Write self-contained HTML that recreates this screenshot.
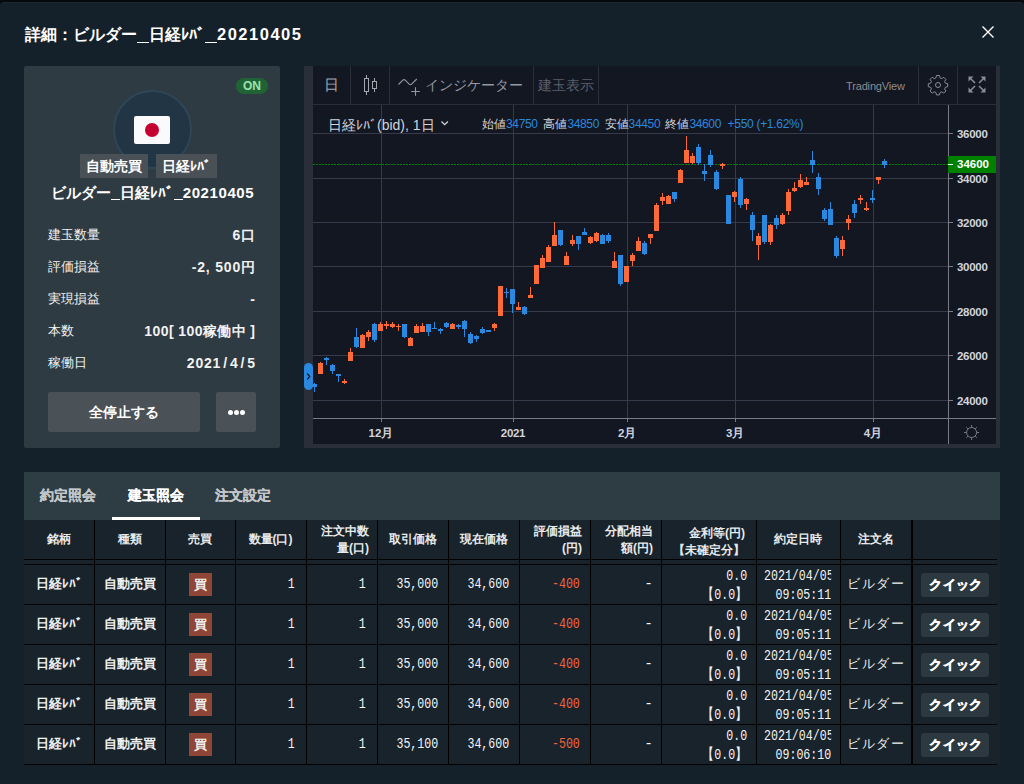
<!DOCTYPE html>
<html><head><meta charset="utf-8">
<style>
*{box-sizing:border-box;margin:0;padding:0}
html,body{width:1024px;height:784px;overflow:hidden;background:#05090c}
body{font-family:"Liberation Sans",sans-serif;color:#fff;position:relative}
.abs{position:absolute}
.modal{left:0;top:2px;width:1024px;height:782px;background:#15212a;border-radius:4px 4px 0 0;border-top:1px solid #1c272f}
.title{left:25px;top:23px;font-size:16px;font-weight:bold;color:#fff;white-space:nowrap;line-height:22px}
.close{left:981px;top:25px;width:14px;height:14px}
.card{left:24px;top:66px;width:256px;height:382px;background:#2e3b42;border-radius:2px}
.on{left:236px;top:78px;width:32px;height:16px;border-radius:8px;background:#206436;color:#9ee2aa;font-size:12px;font-weight:bold;text-align:center;line-height:16px}
.circle{left:112.5px;top:90px;width:79px;height:79px;border-radius:50%;background:#213545;border:2px solid #2e4655}
.flag{left:134px;top:116px;width:36px;height:28px;background:#fafafa;border-radius:2px}
.flag i{position:absolute;left:11px;top:7px;width:14px;height:14px;border-radius:50%;background:#c4002f}
.tag{top:154px;height:24px;background:#4a5156;font-size:14px;font-weight:bold;line-height:24px;text-align:center;color:#fff}
.name{left:24px;top:183px;width:256px;text-align:center;font-size:15px;font-weight:bold;line-height:20px;white-space:nowrap}
.row{left:48px;width:207px;height:20px;font-size:13px;line-height:20px;color:#f2f2f2}
.row span{position:absolute;right:0;top:0;font-weight:bold;white-space:nowrap;font-size:14px;letter-spacing:0.8px;margin-right:-0.8px}
.btn{top:392px;height:40px;background:#4b5257;border-radius:2px;text-align:center;line-height:40px;font-size:14px;font-weight:bold}
.dot{position:absolute;width:5px;height:5px;border-radius:50%;background:#fff}
.ct{position:absolute;white-space:nowrap;line-height:16px}
.tabs{left:24px;top:472px;width:976px;height:48px;background:#2e3c43}
.tab{top:481px;font-size:14px;font-weight:bold;line-height:28px;color:#c3c7cb;white-space:nowrap;-webkit-text-stroke:0.15px currentColor}
.tbl{left:24px;top:520px;width:976px;height:245px;background:#18232b}
.vl{position:absolute;top:520px;width:1px;height:244px;background:#000}
.hl{position:absolute;left:24px;width:973px;height:1px;background:#000}
.th{position:absolute;top:520px;height:39px;font-size:12px;font-weight:bold;color:#e8eaec;line-height:17px;display:flex;align-items:center;justify-content:center;text-align:center}
.th.r{justify-content:flex-end;text-align:right;padding-right:8px}
.td{position:absolute;height:40px;display:flex;align-items:center;white-space:nowrap;font-size:13px;font-weight:bold;color:#f0f0f0;overflow:hidden}
.c{justify-content:center}
.rt{justify-content:flex-end;padding-right:10px}
.mono{font-family:"Liberation Mono",monospace;font-weight:normal;font-size:14.5px;color:#f4f4f4}
.sx{display:inline-block;transform:scaleX(0.8)}
.buy{width:23px;height:23px;background:#8f4636;font-size:13px;line-height:23px;text-align:center;font-weight:bold}
.q{width:68px;height:24px;margin-top:2px;background:#2c3940;border-radius:3px;font-size:13px;font-weight:bold;line-height:24px;text-align:center;-webkit-text-stroke:0.5px #fff;letter-spacing:0.3px;padding-left:2px}
</style></head><body>
<div class="abs modal"></div>
<div class="abs title">詳細：ビルダー<span style="display:inline-block;width:12px;height:1.5px;background:#fff;vertical-align:-3px"></span>日経ﾚﾊﾞ<span style="display:inline-block;width:12px;height:1.5px;background:#fff;vertical-align:-3px"></span><span style="letter-spacing:1.5px;font-size:16.5px">20210405</span></div>
<svg class="abs close" viewBox="0 0 14 14"><path d="M1.5 1.5L12.5 12.5M12.5 1.5L1.5 12.5" stroke="#fff" stroke-width="1.35"/></svg>

<div class="abs card"></div>
<div class="abs on">ON</div>
<div class="abs circle"></div>
<div class="abs flag"><i></i></div>
<div class="abs tag" style="left:80px;width:68px">自動売買</div>
<div class="abs tag" style="left:156px;width:61px">日経ﾚﾊﾞ</div>
<div class="abs name" style="padding-left:1px">ビルダー<span style="display:inline-block;width:9px;height:1.5px;background:#fff;vertical-align:-2px"></span>日経ﾚﾊﾞ<span style="display:inline-block;width:9px;height:1.5px;background:#fff;vertical-align:-2px"></span><span style="letter-spacing:0.6px">20210405</span></div>
<div class="abs row" style="top:225px">建玉数量<span>6口</span></div>
<div class="abs row" style="top:257px">評価損益<span>-2, 500円</span></div>
<div class="abs row" style="top:289px">実現損益<span>-</span></div>
<div class="abs row" style="top:321px">本数<span style="letter-spacing:0.4px;margin-right:-0.4px">100[ 100稼働中 ]</span></div>
<div class="abs row" style="top:353px">稼働日<span>2021<b style="margin:0 2px">/</b>4<b style="margin:0 2px">/</b>5</span></div>
<div class="abs btn" style="left:48px;width:152px">全停止する</div>
<div class="abs btn" style="left:216px;width:40px"><i class="dot" style="left:11.5px;top:17.5px"></i><i class="dot" style="left:17.5px;top:17.5px"></i><i class="dot" style="left:23.5px;top:17.5px"></i></div>

<svg class="abs" style="left:304px;top:66px" width="696" height="382" viewBox="304 66 696 382" shape-rendering="crispEdges">
<rect x="304" y="66" width="696" height="382" fill="#2a2e39"/>
<rect x="313" y="66" width="683" height="378" fill="#131722"/>
<rect x="313" y="104" width="683" height="1" fill="#2a2e39"/>
<rect x="350" y="66" width="1" height="38" fill="#2a2e39"/>
<rect x="389" y="66" width="1" height="38" fill="#2a2e39"/>
<rect x="533" y="66" width="1" height="38" fill="#2a2e39"/>
<rect x="598" y="66" width="1" height="38" fill="#2a2e39"/>
<rect x="918" y="66" width="1" height="38" fill="#2a2e39"/>
<rect x="957" y="66" width="1" height="38" fill="#2a2e39"/>
<rect x="313" y="133" width="635" height="1" fill="#363a4a"/>
<rect x="948" y="133" width="5" height="1" fill="#787b86"/>
<rect x="313" y="178" width="635" height="1" fill="#363a4a"/>
<rect x="948" y="178" width="5" height="1" fill="#787b86"/>
<rect x="313" y="222" width="635" height="1" fill="#363a4a"/>
<rect x="948" y="222" width="5" height="1" fill="#787b86"/>
<rect x="313" y="266" width="635" height="1" fill="#363a4a"/>
<rect x="948" y="266" width="5" height="1" fill="#787b86"/>
<rect x="313" y="311" width="635" height="1" fill="#363a4a"/>
<rect x="948" y="311" width="5" height="1" fill="#787b86"/>
<rect x="313" y="355" width="635" height="1" fill="#363a4a"/>
<rect x="948" y="355" width="5" height="1" fill="#787b86"/>
<rect x="313" y="400" width="635" height="1" fill="#363a4a"/>
<rect x="948" y="400" width="5" height="1" fill="#787b86"/>
<rect x="381" y="105" width="1" height="313" fill="#363a4a"/>
<rect x="381" y="418" width="1" height="4" fill="#787b86"/>
<rect x="513" y="105" width="1" height="313" fill="#363a4a"/>
<rect x="513" y="418" width="1" height="4" fill="#787b86"/>
<rect x="627" y="105" width="1" height="313" fill="#363a4a"/>
<rect x="627" y="418" width="1" height="4" fill="#787b86"/>
<rect x="735" y="105" width="1" height="313" fill="#363a4a"/>
<rect x="735" y="418" width="1" height="4" fill="#787b86"/>
<rect x="873" y="105" width="1" height="313" fill="#363a4a"/>
<rect x="873" y="418" width="1" height="4" fill="#787b86"/>
<rect x="948" y="105" width="1" height="339" fill="#787b86"/>
<rect x="313" y="418" width="683" height="1" fill="#787b86"/>
<line x1="313" y1="164.5" x2="948" y2="164.5" stroke="#008000" stroke-width="1" stroke-dasharray="2 1"/>
<rect x="314" y="383" width="1" height="9" fill="#2b88df"/>
<rect x="312" y="384" width="5" height="3" fill="#2b88df"/>
<rect x="320" y="362" width="1" height="12" fill="#fb6a37"/>
<rect x="318" y="363" width="5" height="11" fill="#fb6a37"/>
<rect x="326" y="357" width="1" height="8" fill="#2b88df"/>
<rect x="324" y="358" width="5" height="2" fill="#2b88df"/>
<rect x="332" y="364" width="1" height="10" fill="#2b88df"/>
<rect x="330" y="365" width="5" height="6" fill="#2b88df"/>
<rect x="338" y="374" width="1" height="8" fill="#2b88df"/>
<rect x="336" y="374" width="5" height="2" fill="#2b88df"/>
<rect x="344" y="379" width="1" height="5" fill="#fb6a37"/>
<rect x="342" y="381" width="5" height="2" fill="#fb6a37"/>
<rect x="350" y="348" width="1" height="13" fill="#fb6a37"/>
<rect x="348" y="352" width="5" height="9" fill="#fb6a37"/>
<rect x="356" y="328" width="1" height="20" fill="#2b88df"/>
<rect x="354" y="337" width="5" height="10" fill="#2b88df"/>
<rect x="362" y="334" width="1" height="14" fill="#fb6a37"/>
<rect x="360" y="335" width="5" height="13" fill="#fb6a37"/>
<rect x="368" y="330" width="1" height="11" fill="#fb6a37"/>
<rect x="366" y="332" width="5" height="5" fill="#fb6a37"/>
<rect x="374" y="323" width="1" height="19" fill="#2b88df"/>
<rect x="372" y="324" width="5" height="16" fill="#2b88df"/>
<rect x="380" y="322" width="1" height="9" fill="#fb6a37"/>
<rect x="378" y="324" width="5" height="7" fill="#fb6a37"/>
<rect x="386" y="321" width="1" height="8" fill="#fb6a37"/>
<rect x="384" y="324" width="5" height="2" fill="#fb6a37"/>
<rect x="392" y="322" width="1" height="6" fill="#fb6a37"/>
<rect x="390" y="324" width="5" height="3" fill="#fb6a37"/>
<rect x="398" y="324" width="1" height="7" fill="#fb6a37"/>
<rect x="396" y="326" width="5" height="1" fill="#fb6a37"/>
<rect x="404" y="324" width="1" height="14" fill="#2b88df"/>
<rect x="402" y="324" width="5" height="13" fill="#2b88df"/>
<rect x="410" y="337" width="1" height="9" fill="#fb6a37"/>
<rect x="408" y="338" width="5" height="8" fill="#fb6a37"/>
<rect x="416" y="324" width="1" height="9" fill="#fb6a37"/>
<rect x="414" y="326" width="5" height="7" fill="#fb6a37"/>
<rect x="422" y="323" width="1" height="9" fill="#fb6a37"/>
<rect x="420" y="326" width="5" height="6" fill="#fb6a37"/>
<rect x="428" y="324" width="1" height="12" fill="#2b88df"/>
<rect x="426" y="324" width="5" height="8" fill="#2b88df"/>
<rect x="434" y="322" width="1" height="7" fill="#2b88df"/>
<rect x="432" y="328" width="5" height="1" fill="#2b88df"/>
<rect x="440" y="328" width="1" height="6" fill="#2b88df"/>
<rect x="438" y="329" width="5" height="2" fill="#2b88df"/>
<rect x="446" y="322" width="1" height="6" fill="#2b88df"/>
<rect x="444" y="323" width="5" height="4" fill="#2b88df"/>
<rect x="452" y="323" width="1" height="6" fill="#fb6a37"/>
<rect x="450" y="324" width="5" height="5" fill="#fb6a37"/>
<rect x="458" y="324" width="1" height="5" fill="#2b88df"/>
<rect x="456" y="325" width="5" height="2" fill="#2b88df"/>
<rect x="464" y="320" width="1" height="17" fill="#2b88df"/>
<rect x="462" y="321" width="5" height="8" fill="#2b88df"/>
<rect x="470" y="332" width="1" height="12" fill="#2b88df"/>
<rect x="468" y="334" width="5" height="9" fill="#2b88df"/>
<rect x="476" y="335" width="1" height="7" fill="#2b88df"/>
<rect x="474" y="336" width="5" height="3" fill="#2b88df"/>
<rect x="482" y="327" width="1" height="7" fill="#2b88df"/>
<rect x="480" y="329" width="5" height="4" fill="#2b88df"/>
<rect x="488" y="330" width="1" height="2" fill="#2b88df"/>
<rect x="486" y="330" width="5" height="2" fill="#2b88df"/>
<rect x="494" y="323" width="1" height="8" fill="#fb6a37"/>
<rect x="492" y="324" width="5" height="4" fill="#fb6a37"/>
<rect x="500" y="286" width="1" height="30" fill="#fb6a37"/>
<rect x="498" y="286" width="5" height="30" fill="#fb6a37"/>
<rect x="506" y="288" width="1" height="10" fill="#2b88df"/>
<rect x="504" y="292" width="5" height="1" fill="#2b88df"/>
<rect x="512" y="289" width="1" height="24" fill="#2b88df"/>
<rect x="510" y="289" width="5" height="15" fill="#2b88df"/>
<rect x="518" y="302" width="1" height="8" fill="#fb6a37"/>
<rect x="516" y="307" width="5" height="3" fill="#fb6a37"/>
<rect x="524" y="306" width="1" height="9" fill="#2b88df"/>
<rect x="522" y="307" width="5" height="7" fill="#2b88df"/>
<rect x="530" y="287" width="1" height="11" fill="#fb6a37"/>
<rect x="528" y="295" width="5" height="3" fill="#fb6a37"/>
<rect x="536" y="265" width="1" height="19" fill="#fb6a37"/>
<rect x="534" y="265" width="5" height="19" fill="#fb6a37"/>
<rect x="542" y="255" width="1" height="13" fill="#fb6a37"/>
<rect x="540" y="258" width="5" height="10" fill="#fb6a37"/>
<rect x="548" y="245" width="1" height="17" fill="#fb6a37"/>
<rect x="546" y="247" width="5" height="15" fill="#fb6a37"/>
<rect x="554" y="222" width="1" height="24" fill="#fb6a37"/>
<rect x="552" y="235" width="5" height="11" fill="#fb6a37"/>
<rect x="560" y="230" width="1" height="16" fill="#2b88df"/>
<rect x="558" y="230" width="5" height="15" fill="#2b88df"/>
<rect x="566" y="252" width="1" height="13" fill="#fb6a37"/>
<rect x="564" y="256" width="5" height="9" fill="#fb6a37"/>
<rect x="572" y="235" width="1" height="11" fill="#fb6a37"/>
<rect x="570" y="240" width="5" height="4" fill="#fb6a37"/>
<rect x="578" y="236" width="1" height="14" fill="#2b88df"/>
<rect x="576" y="236" width="5" height="8" fill="#2b88df"/>
<rect x="584" y="228" width="1" height="7" fill="#2b88df"/>
<rect x="582" y="232" width="5" height="3" fill="#2b88df"/>
<rect x="590" y="236" width="1" height="8" fill="#fb6a37"/>
<rect x="588" y="237" width="5" height="6" fill="#fb6a37"/>
<rect x="596" y="232" width="1" height="10" fill="#fb6a37"/>
<rect x="594" y="233" width="5" height="8" fill="#fb6a37"/>
<rect x="602" y="234" width="1" height="10" fill="#2b88df"/>
<rect x="600" y="235" width="5" height="9" fill="#2b88df"/>
<rect x="608" y="233" width="1" height="10" fill="#2b88df"/>
<rect x="606" y="235" width="5" height="6" fill="#2b88df"/>
<rect x="614" y="252" width="1" height="16" fill="#fb6a37"/>
<rect x="612" y="261" width="5" height="7" fill="#fb6a37"/>
<rect x="620" y="255" width="1" height="31" fill="#2b88df"/>
<rect x="618" y="255" width="5" height="29" fill="#2b88df"/>
<rect x="626" y="266" width="1" height="16" fill="#fb6a37"/>
<rect x="624" y="266" width="5" height="16" fill="#fb6a37"/>
<rect x="632" y="253" width="1" height="13" fill="#fb6a37"/>
<rect x="630" y="255" width="5" height="6" fill="#fb6a37"/>
<rect x="638" y="237" width="1" height="14" fill="#fb6a37"/>
<rect x="636" y="241" width="5" height="10" fill="#fb6a37"/>
<rect x="644" y="241" width="1" height="14" fill="#2b88df"/>
<rect x="642" y="243" width="5" height="11" fill="#2b88df"/>
<rect x="650" y="234" width="1" height="10" fill="#fb6a37"/>
<rect x="648" y="234" width="5" height="4" fill="#fb6a37"/>
<rect x="656" y="203" width="1" height="28" fill="#fb6a37"/>
<rect x="654" y="205" width="5" height="26" fill="#fb6a37"/>
<rect x="662" y="193" width="1" height="12" fill="#fb6a37"/>
<rect x="660" y="197" width="5" height="4" fill="#fb6a37"/>
<rect x="668" y="195" width="1" height="9" fill="#fb6a37"/>
<rect x="666" y="196" width="5" height="8" fill="#fb6a37"/>
<rect x="674" y="192" width="1" height="10" fill="#2b88df"/>
<rect x="672" y="192" width="5" height="7" fill="#2b88df"/>
<rect x="680" y="169" width="1" height="14" fill="#fb6a37"/>
<rect x="678" y="170" width="5" height="13" fill="#fb6a37"/>
<rect x="686" y="136" width="1" height="27" fill="#fb6a37"/>
<rect x="684" y="150" width="5" height="13" fill="#fb6a37"/>
<rect x="692" y="153" width="1" height="11" fill="#fb6a37"/>
<rect x="690" y="156" width="5" height="7" fill="#fb6a37"/>
<rect x="698" y="144" width="1" height="21" fill="#2b88df"/>
<rect x="696" y="147" width="5" height="16" fill="#2b88df"/>
<rect x="704" y="164" width="1" height="17" fill="#2b88df"/>
<rect x="702" y="171" width="5" height="3" fill="#2b88df"/>
<rect x="710" y="150" width="1" height="17" fill="#2b88df"/>
<rect x="708" y="155" width="5" height="10" fill="#2b88df"/>
<rect x="716" y="170" width="1" height="20" fill="#2b88df"/>
<rect x="714" y="172" width="5" height="17" fill="#2b88df"/>
<rect x="722" y="163" width="1" height="6" fill="#fb6a37"/>
<rect x="720" y="164" width="5" height="2" fill="#fb6a37"/>
<rect x="728" y="195" width="1" height="29" fill="#2b88df"/>
<rect x="726" y="195" width="5" height="29" fill="#2b88df"/>
<rect x="734" y="191" width="1" height="11" fill="#fb6a37"/>
<rect x="732" y="192" width="5" height="5" fill="#fb6a37"/>
<rect x="740" y="177" width="1" height="31" fill="#2b88df"/>
<rect x="738" y="179" width="5" height="26" fill="#2b88df"/>
<rect x="746" y="198" width="1" height="12" fill="#fb6a37"/>
<rect x="744" y="199" width="5" height="5" fill="#fb6a37"/>
<rect x="752" y="212" width="1" height="29" fill="#2b88df"/>
<rect x="750" y="215" width="5" height="15" fill="#2b88df"/>
<rect x="758" y="233" width="1" height="27" fill="#fb6a37"/>
<rect x="756" y="236" width="5" height="9" fill="#fb6a37"/>
<rect x="764" y="215" width="1" height="29" fill="#2b88df"/>
<rect x="762" y="215" width="5" height="27" fill="#2b88df"/>
<rect x="770" y="224" width="1" height="21" fill="#fb6a37"/>
<rect x="768" y="225" width="5" height="17" fill="#fb6a37"/>
<rect x="776" y="215" width="1" height="14" fill="#2b88df"/>
<rect x="774" y="218" width="5" height="7" fill="#2b88df"/>
<rect x="782" y="213" width="1" height="12" fill="#fb6a37"/>
<rect x="780" y="215" width="5" height="9" fill="#fb6a37"/>
<rect x="788" y="189" width="1" height="26" fill="#fb6a37"/>
<rect x="786" y="192" width="5" height="19" fill="#fb6a37"/>
<rect x="794" y="182" width="1" height="10" fill="#fb6a37"/>
<rect x="792" y="188" width="5" height="3" fill="#fb6a37"/>
<rect x="800" y="174" width="1" height="14" fill="#fb6a37"/>
<rect x="798" y="180" width="5" height="7" fill="#fb6a37"/>
<rect x="806" y="177" width="1" height="8" fill="#fb6a37"/>
<rect x="804" y="182" width="5" height="3" fill="#fb6a37"/>
<rect x="812" y="151" width="1" height="22" fill="#2b88df"/>
<rect x="810" y="160" width="5" height="5" fill="#2b88df"/>
<rect x="818" y="173" width="1" height="22" fill="#2b88df"/>
<rect x="816" y="177" width="5" height="12" fill="#2b88df"/>
<rect x="824" y="208" width="1" height="13" fill="#2b88df"/>
<rect x="822" y="210" width="5" height="9" fill="#2b88df"/>
<rect x="830" y="202" width="1" height="23" fill="#2b88df"/>
<rect x="828" y="209" width="5" height="16" fill="#2b88df"/>
<rect x="836" y="236" width="1" height="22" fill="#2b88df"/>
<rect x="834" y="238" width="5" height="18" fill="#2b88df"/>
<rect x="842" y="236" width="1" height="20" fill="#fb6a37"/>
<rect x="840" y="240" width="5" height="9" fill="#fb6a37"/>
<rect x="848" y="215" width="1" height="15" fill="#fb6a37"/>
<rect x="846" y="219" width="5" height="4" fill="#fb6a37"/>
<rect x="854" y="200" width="1" height="18" fill="#2b88df"/>
<rect x="852" y="204" width="5" height="9" fill="#2b88df"/>
<rect x="860" y="195" width="1" height="9" fill="#fb6a37"/>
<rect x="858" y="198" width="5" height="2" fill="#fb6a37"/>
<rect x="866" y="202" width="1" height="9" fill="#fb6a37"/>
<rect x="864" y="208" width="5" height="2" fill="#fb6a37"/>
<rect x="872" y="190" width="1" height="13" fill="#2b88df"/>
<rect x="870" y="198" width="5" height="2" fill="#2b88df"/>
<rect x="878" y="177" width="1" height="7" fill="#fb6a37"/>
<rect x="876" y="177" width="5" height="3" fill="#fb6a37"/>
<rect x="884" y="159" width="1" height="9" fill="#2b88df"/>
<rect x="882" y="161" width="5" height="4" fill="#2b88df"/>
<rect x="948" y="156" width="48" height="17" fill="#008000"/>
<rect x="948" y="164" width="5" height="1" fill="#fff"/>
</svg>
<div class="ct" style="left:324px;top:77px;font-size:15px;color:#a3a6af">日</div>
<svg class="abs" style="left:360px;top:74px" width="20" height="22" viewBox="360 74 20 22" shape-rendering="crispEdges">
<rect x="366" y="75" width="1" height="3" fill="#a3a6af"/><rect x="364.5" y="78.5" width="4" height="13" fill="none" stroke="#a3a6af"/><rect x="366" y="92" width="1" height="3" fill="#a3a6af"/>
<rect x="374" y="78" width="1" height="3" fill="#a3a6af"/><rect x="372.5" y="81.5" width="4" height="7" fill="none" stroke="#a3a6af"/><rect x="374" y="89" width="1" height="3" fill="#a3a6af"/>
</svg>
<svg class="abs" style="left:396px;top:76px" width="26" height="22" viewBox="396 76 26 22"><path d="M398.5 84.5L402.8 80.2Q404 79 405.2 80.2L409.2 84.2Q410.4 85.4 411.6 84.2L416.8 79" fill="none" stroke="#9598a1" stroke-width="1.1"/><path d="M415.5 87.2V95.8M411.2 91.5H419.8" stroke="#9598a1" stroke-width="1.1"/></svg>
<div class="ct" style="left:425px;top:76px;font-size:14px;color:#9598a1;line-height:18px">インジケーター</div>
<div class="ct" style="left:538px;top:76px;font-size:14px;color:#5d606b;line-height:18px">建玉表示</div>
<div class="ct" style="left:846px;top:78px;font-size:11px;color:#8c8c8e;letter-spacing:-0.15px">TradingView</div>
<svg class="abs" style="left:926px;top:73px" width="24" height="24" viewBox="0 0 24 24"><path fill="none" stroke="#8a8d96" stroke-width="1" d="M10.5 2.5h3l.6 2.4 1.6.7 2.1-1.3 2.1 2.1-1.3 2.1.7 1.6 2.4.6v3l-2.4.6-.7 1.6 1.3 2.1-2.1 2.1-2.1-1.3-1.6.7-.6 2.4h-3l-.6-2.4-1.6-.7-2.1 1.3-2.1-2.1 1.3-2.1-.7-1.6-2.4-.6v-3l2.4-.6.7-1.6-1.3-2.1 2.1-2.1 2.1 1.3 1.6-.7z"/><circle cx="12" cy="12" r="2.5" fill="none" stroke="#8a8d96"/></svg>
<svg class="abs" style="left:966px;top:74px" width="22" height="22" viewBox="966 74 22 22"><g fill="#8a8d96"><path d="M968.5 76.5h5l-5 5z"/><path d="M985.5 76.5h-5l5 5z"/><path d="M968.5 92.5h5l-5-5z"/><path d="M985.5 92.5h-5l5-5z"/></g><g stroke="#8a8d96" stroke-width="1.5"><path d="M970.5 78.5l4.5 4.5M983.5 78.5l-4.5 4.5M970.5 90.5l4.5-4.5M983.5 90.5l-4.5-4.5"/></g></svg>
<div class="ct" style="left:328px;top:116px;font-size:14px;color:#d1d4dc;line-height:18px">日経ﾚﾊﾞ(bid), 1日</div>
<svg class="abs" style="left:440px;top:119px" width="10" height="8" viewBox="0 0 10 8"><path d="M1.5 2.5l3.2 3.2 3.2-3.2" fill="none" stroke="#d1d4dc" stroke-width="1.3"/></svg>
<div class="ct" style="left:482px;top:116px;font-size:12px;color:#d1d4dc;line-height:17px">始値<span style="color:#2b88df;letter-spacing:-0.35px">34750</span></div>
<div class="ct" style="left:543.4px;top:116px;font-size:12px;color:#d1d4dc;line-height:17px">高値<span style="color:#2b88df;letter-spacing:-0.35px">34850</span></div>
<div class="ct" style="left:604.6px;top:116px;font-size:12px;color:#d1d4dc;line-height:17px">安値<span style="color:#2b88df;letter-spacing:-0.35px">34450</span></div>
<div class="ct" style="left:665.4px;top:116px;font-size:12px;color:#d1d4dc;line-height:17px">終値<span style="color:#2b88df;letter-spacing:-0.35px">34600</span></div>
<div class="ct" style="left:727.6px;top:116px;font-size:12px;color:#2b88df;line-height:17px;letter-spacing:-0.3px">+550 (+1.62%)</div>
<div class="ct" style="left:957px;top:126px;font-size:11.5px;font-weight:bold;color:#d1d4dc;letter-spacing:-0.3px">36000</div>
<div class="ct" style="left:957px;top:156px;font-size:11.5px;font-weight:bold;color:#fff;line-height:17px">34600</div>
<div class="ct" style="left:957px;top:171px;font-size:11.5px;font-weight:bold;color:#d1d4dc;letter-spacing:-0.3px">34000</div>
<div class="ct" style="left:957px;top:215px;font-size:11.5px;font-weight:bold;color:#d1d4dc;letter-spacing:-0.3px">32000</div>
<div class="ct" style="left:957px;top:259px;font-size:11.5px;font-weight:bold;color:#d1d4dc;letter-spacing:-0.3px">30000</div>
<div class="ct" style="left:957px;top:304px;font-size:11.5px;font-weight:bold;color:#d1d4dc;letter-spacing:-0.3px">28000</div>
<div class="ct" style="left:957px;top:348px;font-size:11.5px;font-weight:bold;color:#d1d4dc;letter-spacing:-0.3px">26000</div>
<div class="ct" style="left:957px;top:393px;font-size:11.5px;font-weight:bold;color:#d1d4dc;letter-spacing:-0.3px">24000</div>
<div class="ct" style="left:361px;top:425px;width:40px;text-align:center;font-size:11.5px;font-weight:bold;color:#d1d4dc">12月</div>
<div class="ct" style="left:493px;top:425px;width:40px;text-align:center;font-size:11.5px;font-weight:bold;color:#d1d4dc;letter-spacing:-0.3px">2021</div>
<div class="ct" style="left:607px;top:425px;width:40px;text-align:center;font-size:11.5px;font-weight:bold;color:#d1d4dc;letter-spacing:-0.3px">2月</div>
<div class="ct" style="left:715px;top:425px;width:40px;text-align:center;font-size:11.5px;font-weight:bold;color:#d1d4dc;letter-spacing:-0.3px">3月</div>
<div class="ct" style="left:853px;top:425px;width:40px;text-align:center;font-size:11.5px;font-weight:bold;color:#d1d4dc">4月</div>
<svg class="abs" style="left:962px;top:423px" width="20" height="20" viewBox="0 0 20 20"><g fill="none" stroke="#787b86" stroke-width="1"><circle cx="9.6" cy="9.5" r="5"/><path d="M9.6 2v2.5M9.6 14.5v2.5M2.1 9.5h2.5M14.6 9.5h2.5M4.3 4.2l1.7 1.7M13.2 13.1l1.7 1.7M4.3 14.8l1.7-1.7M13.2 5.9l1.7-1.7"/></g></svg>
<svg class="abs" style="left:304px;top:363px" width="9" height="27" viewBox="0 0 9 27"><rect x="0" y="0" width="9" height="27" rx="4.5" fill="#2b88df"/><path d="M3.2 10.5l2.6 3-2.6 3" fill="none" stroke="#131722" stroke-width="1.2"/></svg>

<div class="abs tabs"></div>
<div class="abs tab" style="left:40px">約定照会</div>
<div class="abs tab" style="left:128px;color:#fff">建玉照会</div>
<div class="abs tab" style="left:215px">注文設定</div>
<div class="abs" style="left:112px;top:517px;width:88px;height:3px;background:#fff"></div>
<div class="abs tbl"></div>
<div class="th c" style="left:24px;width:70px">銘柄</div>
<div class="th c" style="left:94px;width:71px">種類</div>
<div class="th c" style="left:165px;width:70px">売買</div>
<div class="th c" style="left:235px;width:71px">数量(口)</div>
<div class="th r" style="left:306px;width:71px">注文中数<br>量(口)</div>
<div class="th c" style="left:377px;width:71px">取引価格</div>
<div class="th c" style="left:448px;width:71px">現在価格</div>
<div class="th r" style="left:519px;width:71px">評価損益<br>(円)</div>
<div class="th r" style="left:590px;width:71px">分配相当<br>額(円)</div>
<div class="th c" style="left:661px;width:95px"><div style="position:relative;width:95px;height:39px"><div style="position:absolute;right:11px;top:5px">金利等(円)</div><div style="position:absolute;left:0;width:95px;text-align:center;top:22px">【未確定分】</div></div></div>
<div class="th c" style="left:756px;width:84px">約定日時</div>
<div class="th c" style="left:840px;width:71px">注文名</div>
<div class="th c" style="left:911px;width:86px"></div>
<div class="td c" style="left:24px;top:564px;width:70px;">日経ﾚﾊﾞ</div>
<div class="td c" style="left:94px;top:564px;width:71px;">自動売買</div>
<div class="td c" style="left:165px;top:564px;width:70px;"><div class="buy">買</div></div>
<div class="td rt mono" style="left:235px;top:564px;width:71px;padding-right:11px"><span class="sx" style="transform-origin:right center">1</span></div>
<div class="td rt mono" style="left:306px;top:564px;width:71px;padding-right:11px"><span class="sx" style="transform-origin:right center">1</span></div>
<div class="td rt mono" style="left:377px;top:564px;width:71px;"><span class="sx" style="transform-origin:right center">35,000</span></div>
<div class="td rt mono" style="left:448px;top:564px;width:71px;"><span class="sx" style="transform-origin:right center">34,600</span></div>
<div class="td rt mono" style="left:519px;top:564px;width:71px;color:#f0643c"><span class="sx" style="transform-origin:right center">-400</span></div>
<div class="td rt mono" style="left:590px;top:564px;width:71px;padding-right:8px">-</div>
<div class="td rt mono" style="left:661px;top:564px;width:95px;padding-right:9px"><div class="sx" style="text-align:right;line-height:19px;margin-top:4px;transform-origin:right center">0.0<br>【0.0】</div></div>
<div class="td mono" style="left:756px;top:564px;width:84px;padding-left:8px"><div class="sx" style="text-align:right;line-height:19px;margin-top:4px;width:84px;flex-shrink:0;overflow:hidden;transform-origin:left center">2021/04/05<br>09:05:11</div></div>
<div class="td c" style="left:840px;top:564px;width:71px;"><span style="font-weight:normal;font-size:13px;letter-spacing:1.6px;margin-right:-1.6px">ビルダー</span></div>
<div class="td " style="left:911px;top:564px;width:86px;padding-left:10px"><div class="q">クイック</div></div>
<div class="td c" style="left:24px;top:604px;width:70px;">日経ﾚﾊﾞ</div>
<div class="td c" style="left:94px;top:604px;width:71px;">自動売買</div>
<div class="td c" style="left:165px;top:604px;width:70px;"><div class="buy">買</div></div>
<div class="td rt mono" style="left:235px;top:604px;width:71px;padding-right:11px"><span class="sx" style="transform-origin:right center">1</span></div>
<div class="td rt mono" style="left:306px;top:604px;width:71px;padding-right:11px"><span class="sx" style="transform-origin:right center">1</span></div>
<div class="td rt mono" style="left:377px;top:604px;width:71px;"><span class="sx" style="transform-origin:right center">35,000</span></div>
<div class="td rt mono" style="left:448px;top:604px;width:71px;"><span class="sx" style="transform-origin:right center">34,600</span></div>
<div class="td rt mono" style="left:519px;top:604px;width:71px;color:#f0643c"><span class="sx" style="transform-origin:right center">-400</span></div>
<div class="td rt mono" style="left:590px;top:604px;width:71px;padding-right:8px">-</div>
<div class="td rt mono" style="left:661px;top:604px;width:95px;padding-right:9px"><div class="sx" style="text-align:right;line-height:19px;margin-top:4px;transform-origin:right center">0.0<br>【0.0】</div></div>
<div class="td mono" style="left:756px;top:604px;width:84px;padding-left:8px"><div class="sx" style="text-align:right;line-height:19px;margin-top:4px;width:84px;flex-shrink:0;overflow:hidden;transform-origin:left center">2021/04/05<br>09:05:11</div></div>
<div class="td c" style="left:840px;top:604px;width:71px;"><span style="font-weight:normal;font-size:13px;letter-spacing:1.6px;margin-right:-1.6px">ビルダー</span></div>
<div class="td " style="left:911px;top:604px;width:86px;padding-left:10px"><div class="q">クイック</div></div>
<div class="td c" style="left:24px;top:644px;width:70px;">日経ﾚﾊﾞ</div>
<div class="td c" style="left:94px;top:644px;width:71px;">自動売買</div>
<div class="td c" style="left:165px;top:644px;width:70px;"><div class="buy">買</div></div>
<div class="td rt mono" style="left:235px;top:644px;width:71px;padding-right:11px"><span class="sx" style="transform-origin:right center">1</span></div>
<div class="td rt mono" style="left:306px;top:644px;width:71px;padding-right:11px"><span class="sx" style="transform-origin:right center">1</span></div>
<div class="td rt mono" style="left:377px;top:644px;width:71px;"><span class="sx" style="transform-origin:right center">35,000</span></div>
<div class="td rt mono" style="left:448px;top:644px;width:71px;"><span class="sx" style="transform-origin:right center">34,600</span></div>
<div class="td rt mono" style="left:519px;top:644px;width:71px;color:#f0643c"><span class="sx" style="transform-origin:right center">-400</span></div>
<div class="td rt mono" style="left:590px;top:644px;width:71px;padding-right:8px">-</div>
<div class="td rt mono" style="left:661px;top:644px;width:95px;padding-right:9px"><div class="sx" style="text-align:right;line-height:19px;margin-top:4px;transform-origin:right center">0.0<br>【0.0】</div></div>
<div class="td mono" style="left:756px;top:644px;width:84px;padding-left:8px"><div class="sx" style="text-align:right;line-height:19px;margin-top:4px;width:84px;flex-shrink:0;overflow:hidden;transform-origin:left center">2021/04/05<br>09:05:11</div></div>
<div class="td c" style="left:840px;top:644px;width:71px;"><span style="font-weight:normal;font-size:13px;letter-spacing:1.6px;margin-right:-1.6px">ビルダー</span></div>
<div class="td " style="left:911px;top:644px;width:86px;padding-left:10px"><div class="q">クイック</div></div>
<div class="td c" style="left:24px;top:684px;width:70px;">日経ﾚﾊﾞ</div>
<div class="td c" style="left:94px;top:684px;width:71px;">自動売買</div>
<div class="td c" style="left:165px;top:684px;width:70px;"><div class="buy">買</div></div>
<div class="td rt mono" style="left:235px;top:684px;width:71px;padding-right:11px"><span class="sx" style="transform-origin:right center">1</span></div>
<div class="td rt mono" style="left:306px;top:684px;width:71px;padding-right:11px"><span class="sx" style="transform-origin:right center">1</span></div>
<div class="td rt mono" style="left:377px;top:684px;width:71px;"><span class="sx" style="transform-origin:right center">35,000</span></div>
<div class="td rt mono" style="left:448px;top:684px;width:71px;"><span class="sx" style="transform-origin:right center">34,600</span></div>
<div class="td rt mono" style="left:519px;top:684px;width:71px;color:#f0643c"><span class="sx" style="transform-origin:right center">-400</span></div>
<div class="td rt mono" style="left:590px;top:684px;width:71px;padding-right:8px">-</div>
<div class="td rt mono" style="left:661px;top:684px;width:95px;padding-right:9px"><div class="sx" style="text-align:right;line-height:19px;margin-top:4px;transform-origin:right center">0.0<br>【0.0】</div></div>
<div class="td mono" style="left:756px;top:684px;width:84px;padding-left:8px"><div class="sx" style="text-align:right;line-height:19px;margin-top:4px;width:84px;flex-shrink:0;overflow:hidden;transform-origin:left center">2021/04/05<br>09:05:11</div></div>
<div class="td c" style="left:840px;top:684px;width:71px;"><span style="font-weight:normal;font-size:13px;letter-spacing:1.6px;margin-right:-1.6px">ビルダー</span></div>
<div class="td " style="left:911px;top:684px;width:86px;padding-left:10px"><div class="q">クイック</div></div>
<div class="td c" style="left:24px;top:724px;width:70px;">日経ﾚﾊﾞ</div>
<div class="td c" style="left:94px;top:724px;width:71px;">自動売買</div>
<div class="td c" style="left:165px;top:724px;width:70px;"><div class="buy">買</div></div>
<div class="td rt mono" style="left:235px;top:724px;width:71px;padding-right:11px"><span class="sx" style="transform-origin:right center">1</span></div>
<div class="td rt mono" style="left:306px;top:724px;width:71px;padding-right:11px"><span class="sx" style="transform-origin:right center">1</span></div>
<div class="td rt mono" style="left:377px;top:724px;width:71px;"><span class="sx" style="transform-origin:right center">35,100</span></div>
<div class="td rt mono" style="left:448px;top:724px;width:71px;"><span class="sx" style="transform-origin:right center">34,600</span></div>
<div class="td rt mono" style="left:519px;top:724px;width:71px;color:#f0643c"><span class="sx" style="transform-origin:right center">-500</span></div>
<div class="td rt mono" style="left:590px;top:724px;width:71px;padding-right:8px">-</div>
<div class="td rt mono" style="left:661px;top:724px;width:95px;padding-right:9px"><div class="sx" style="text-align:right;line-height:19px;margin-top:4px;transform-origin:right center">0.0<br>【0.0】</div></div>
<div class="td mono" style="left:756px;top:724px;width:84px;padding-left:8px"><div class="sx" style="text-align:right;line-height:19px;margin-top:4px;width:84px;flex-shrink:0;overflow:hidden;transform-origin:left center">2021/04/05<br>09:06:10</div></div>
<div class="td c" style="left:840px;top:724px;width:71px;"><span style="font-weight:normal;font-size:13px;letter-spacing:1.6px;margin-right:-1.6px">ビルダー</span></div>
<div class="td " style="left:911px;top:724px;width:86px;padding-left:10px"><div class="q">クイック</div></div>
<div class="hl" style="top:559px"></div>
<div class="hl" style="top:564px"></div>
<div class="hl" style="top:604px"></div>
<div class="hl" style="top:644px"></div>
<div class="hl" style="top:684px"></div>
<div class="hl" style="top:724px"></div>
<div class="hl" style="top:764px"></div>
<div class="vl" style="left:94px;width:1px"></div>
<div class="vl" style="left:165px;width:1px"></div>
<div class="vl" style="left:235px;width:1px"></div>
<div class="vl" style="left:306px;width:1px"></div>
<div class="vl" style="left:377px;width:1px"></div>
<div class="vl" style="left:448px;width:1px"></div>
<div class="vl" style="left:519px;width:1px"></div>
<div class="vl" style="left:590px;width:1px"></div>
<div class="vl" style="left:661px;width:1px"></div>
<div class="vl" style="left:756px;width:1px"></div>
<div class="vl" style="left:840px;width:1px"></div>
<div class="vl" style="left:911px;width:2px"></div>
</body></html>
